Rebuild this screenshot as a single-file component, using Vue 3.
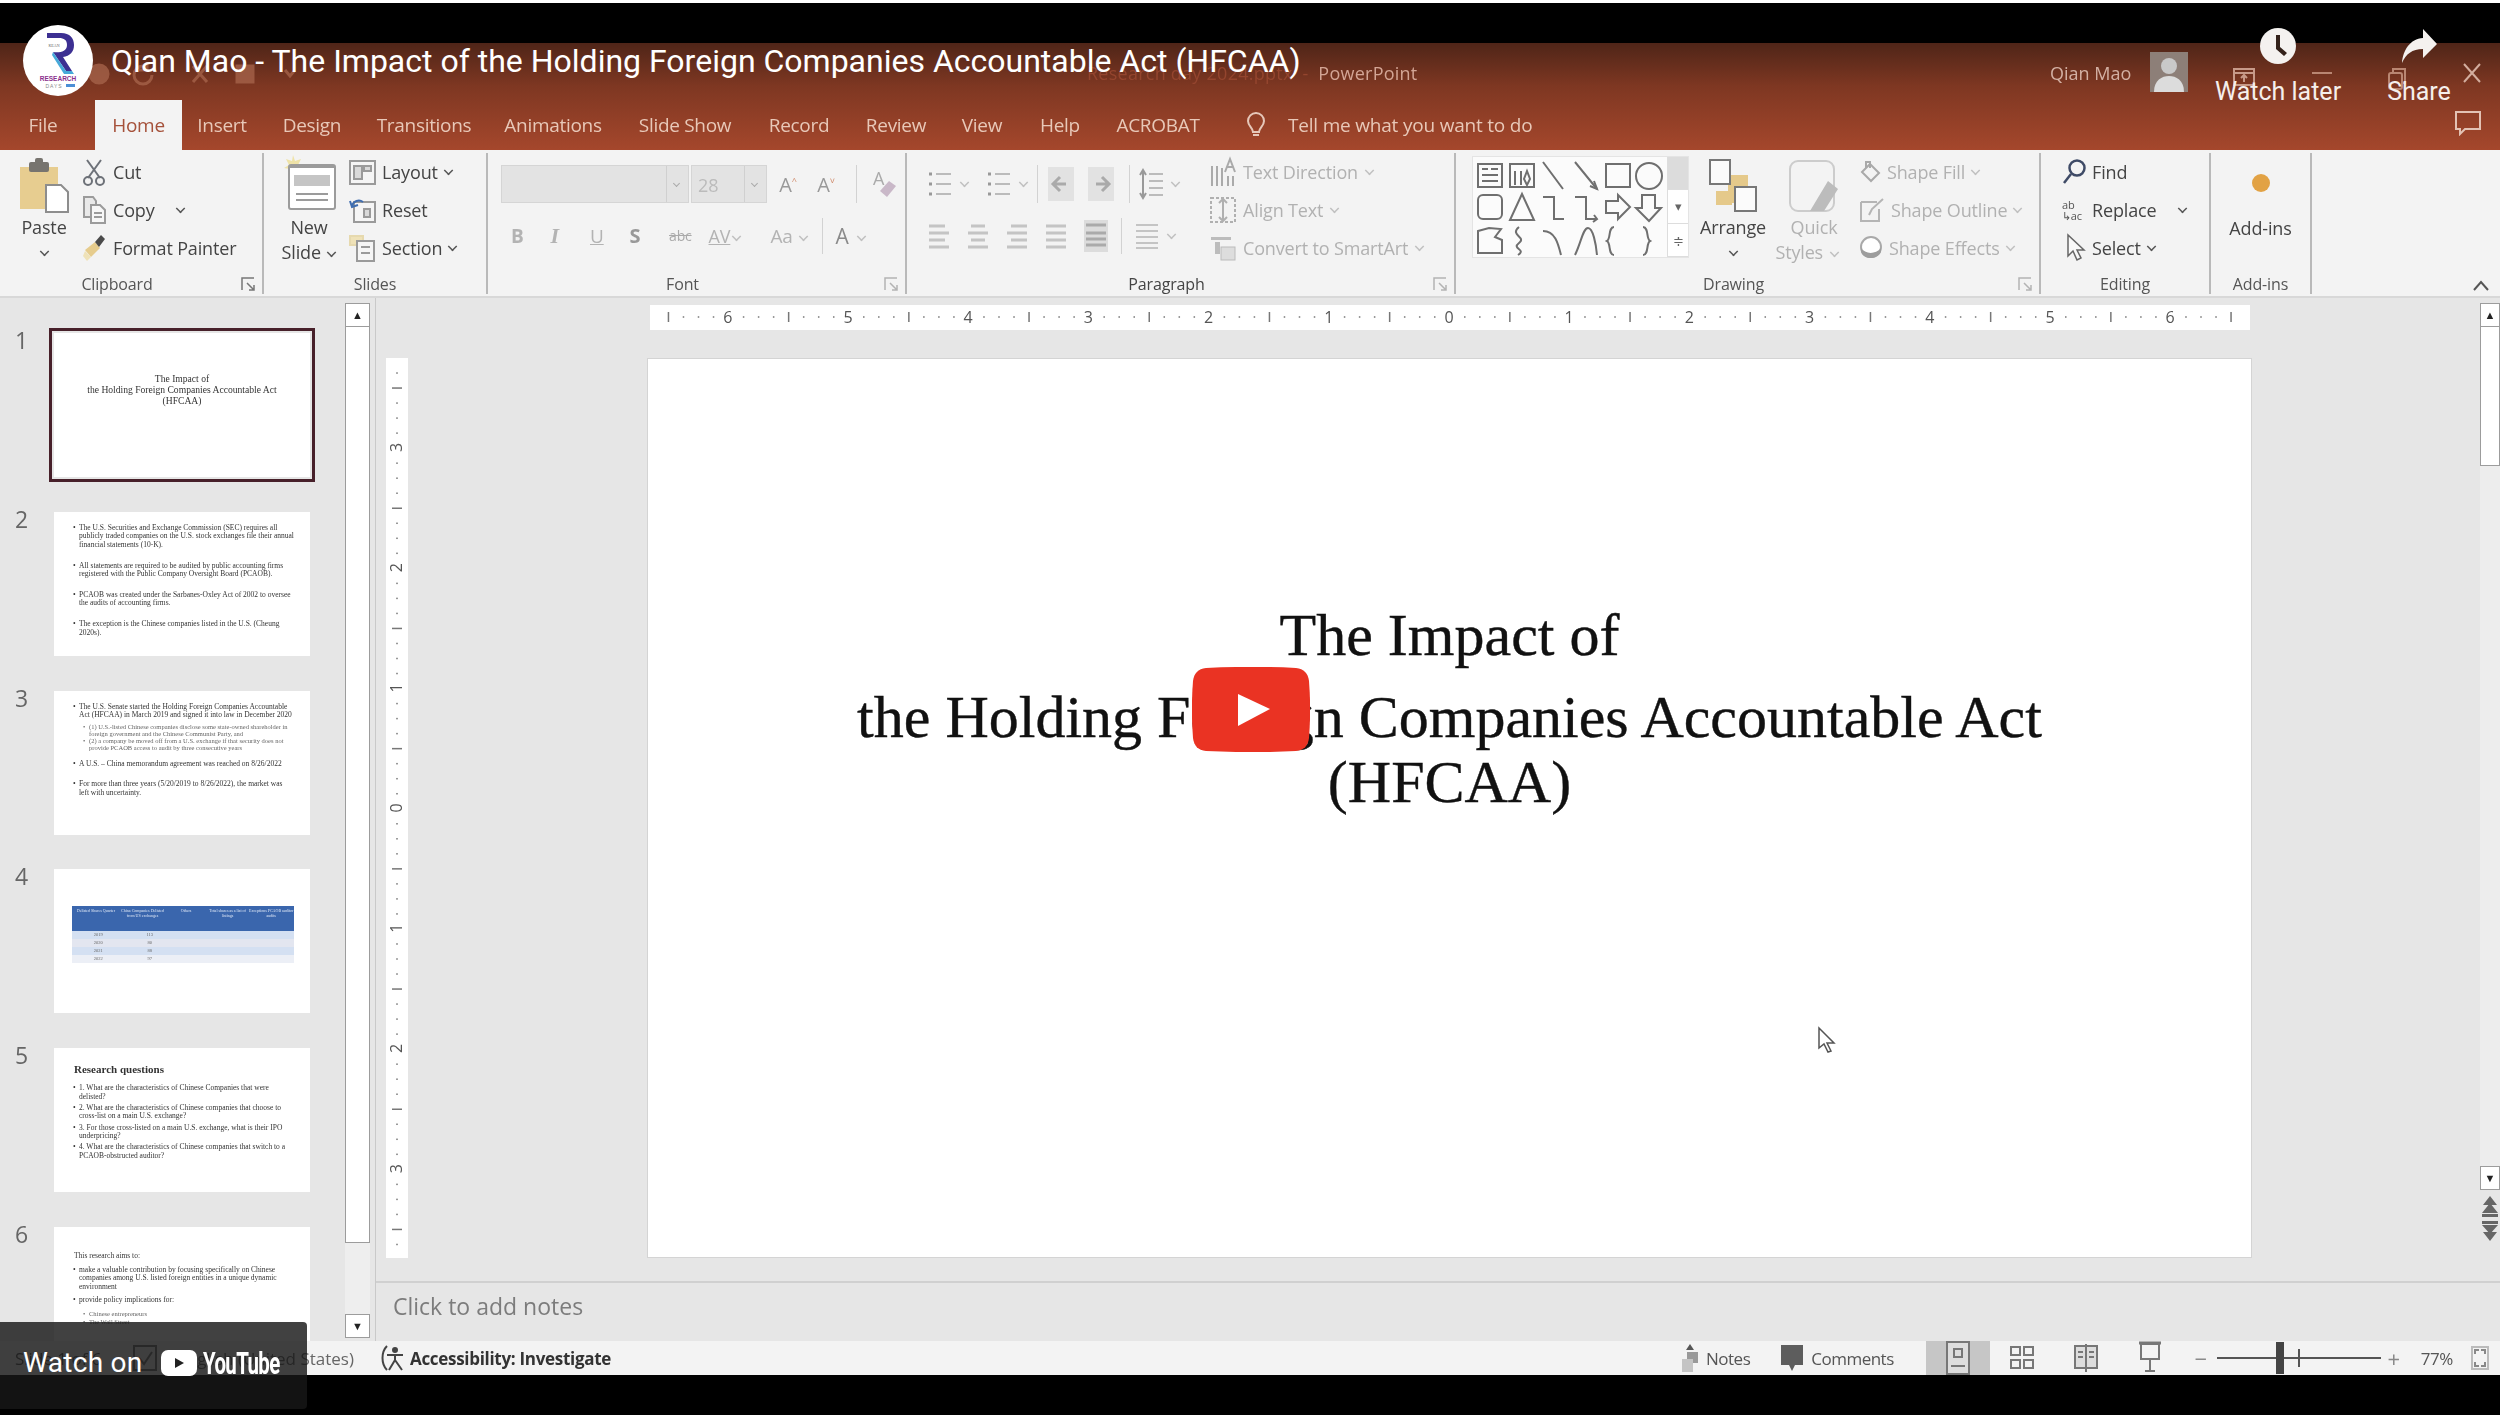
<template>
  <div class="page">
    <div class="bar-black top" />

    <div class="video">
      <header class="titlebar">
        <div class="window-row">
          <div class="qat">
            <svg width="220" height="30" viewBox="0 0 220 30" fill="none" stroke="#a8654c" stroke-width="3">
              <circle cx="14" cy="16" r="9" fill="#a8654c" />
              <path d="M58 8a9 9 0 1 0 9 9M62 4v8h-8" />
              <path d="M108 8l14 16M122 8l-14 16" />
              <rect x="152" y="8" width="16" height="16" fill="#a8654c" />
              <path d="M200 12l5 6 5-6" />
            </svg>
          </div>
          <div class="doc-title">Research day 2024.pptx &nbsp;-&nbsp; <span>PowerPoint</span></div>
          <div class="user-name">Qian Mao</div>
          <div class="avatar">
            <svg width="38" height="40" viewBox="0 0 38 40">
              <circle cx="19" cy="14" r="8" fill="#c9c9c9" />
              <path d="M4 40c0-12 8-16 15-16s15 4 15 16z" fill="#dcdcdc" />
            </svg>
          </div>
          <svg class="win-display" width="24" height="20" viewBox="0 0 24 20" fill="none" stroke="#c79a89" stroke-width="2">
            <rect x="2" y="2" width="20" height="16" />
            <path d="M2 6h20M12 15V9M9 11l3-3 3 3" />
          </svg>
          <span class="win-min" />
          <svg class="win-restore" width="20" height="24" viewBox="0 0 20 24" fill="none" stroke="#b98672" stroke-width="2">
            <rect x="2" y="6" width="13" height="16" rx="2" />
            <path d="M6 6V2h12v14h-3" />
          </svg>
          <svg class="win-close" width="20" height="22" viewBox="0 0 20 22" stroke="#d3ad9e" stroke-width="2">
            <path d="M2 2l16 18M18 2L2 20" />
          </svg>
        </div>

        <nav class="tabs">
          <div
            v-for="tab in tabs"
            :key="tab.label"
            class="tab"
            :class="{ active: tab.label === 'Home' }"
            :style="{ width: tab.w + 'px', marginRight: (tab.after || 0) + 'px' }"
          >
            {{ tab.label }}
          </div>
          <svg class="bulb" width="22" height="28" viewBox="0 0 22 28" fill="none" stroke="#e6c7b9" stroke-width="2">
            <path d="M11 2a8 8 0 0 0-8 8c0 5 5 7 5 11h6c0-4 5-6 5-11a8 8 0 0 0-8-8zM8 24h6" />
          </svg>
          <div class="tell-me">Tell me what you want to do</div>
          <svg class="comment-btn" width="28" height="26" viewBox="0 0 28 26" fill="none" stroke="#e3c2b4" stroke-width="2">
            <path d="M2 2h24v17H11l-5 5v-5H2z" />
          </svg>
        </nav>
      </header>

      <section class="ribbon">
        <div class="group" style="width: 264px">
          <div class="body clip-body">
            <div class="big paste">
              <svg width="52" height="62" viewBox="0 0 52 62">
                <rect x="2" y="14" width="38" height="42" fill="#e7cd90" />
                <rect x="11" y="9" width="20" height="10" rx="2" fill="#77746f" />
                <rect x="17" y="5" width="8" height="7" rx="2" fill="#77746f" />
                <path d="M28 32h15l7 7v20H28z" fill="#fff" stroke="#8d8d8d" stroke-width="2" />
              </svg>
              <span>Paste</span>
              <i class="chev" />
            </div>
            <div class="col clip-col">
              <div class="btn">
                <svg width="24" height="28" viewBox="0 0 24 28" fill="none" stroke="#6d7178" stroke-width="2">
                  <path d="M5 2l13 18M19 2L6 20" />
                  <circle cx="6" cy="23" r="4" />
                  <circle cx="18" cy="23" r="4" />
                </svg>
                <span>Cut</span>
              </div>
              <div class="btn">
                <svg width="24" height="30" viewBox="0 0 24 30" fill="none" stroke="#9b9b9b" stroke-width="2">
                  <path d="M2 2h9l3 4v16H2z" fill="#e9e9e9" />
                  <path d="M9 10h9l5 5v13H9z" fill="#f7f7f7" />
                  <path d="M12 18h8M12 22h8" />
                </svg>
                <span>Copy</span>
                <i class="chev copy-chev" />
              </div>
              <div class="btn">
                <svg width="24" height="30" viewBox="0 0 24 30">
                  <path d="M3 17l10-8 5 6-9 9z" fill="#e6cc8d" />
                  <path d="M13 9l6-7 4 4-6 8z" fill="#4a4a4a" />
                  <path d="M3 18l6 6-4 4-4-5z" fill="#efe2b8" />
                </svg>
                <span>Format Painter</span>
              </div>
            </div>
          </div>
          <div class="label launcher-pad">Clipboard</div>
          <svg class="launcher" width="14" height="14" viewBox="0 0 14 14" fill="none" stroke="#777" stroke-width="1.5">
            <path d="M1 13V1h12M6 6l7 7M13 8v5H8" />
          </svg>
        </div>

        <div class="group" style="width: 224px">
          <div class="body slides-body">
            <div class="big new-slide">
              <svg width="60" height="62" viewBox="0 0 60 62">
                <path d="M14 2l2 6 6-2-3 6 5 3-6 1 1 6-5-4-4 4 1-6-6-1 5-3-3-6 6 2z" fill="#efe3a8" />
                <rect x="10" y="12" width="46" height="44" rx="2" fill="#fff" stroke="#9b9b9b" stroke-width="2" />
                <rect x="10" y="12" width="46" height="3" fill="#9b9b9b" />
                <rect x="15" y="22" width="36" height="11" fill="#c5c5c5" />
                <path d="M17 41h32M17 47h32" stroke="#9b9b9b" stroke-width="2" />
              </svg>
              <span>New</span>
              <span>Slide <i class="chev inline" /></span>
            </div>
            <div class="col slides-col">
              <div class="btn">
                <svg width="27" height="27" viewBox="0 0 27 27" fill="#f5f5f5" stroke="#9a9a9a" stroke-width="2">
                  <rect x="1" y="2" width="25" height="23" />
                  <rect x="5" y="7" width="8" height="13" fill="#d9d9d9" />
                  <rect x="15" y="7" width="7" height="5" fill="#d9d9d9" />
                </svg>
                <span>Layout</span><i class="chev" />
              </div>
              <div class="btn">
                <svg width="27" height="27" viewBox="0 0 27 27" fill="none" stroke="#9a9a9a" stroke-width="2">
                  <rect x="5" y="5" width="21" height="20" fill="#f5f5f5" />
                  <path d="M3 9a7 7 0 0 1 11-4" stroke="#3f6db0" />
                  <path d="M1 4l2 6 6-2" stroke="#3f6db0" />
                  <rect x="15" y="12" width="6" height="8" fill="#d9d9d9" />
                </svg>
                <span>Reset</span>
              </div>
              <div class="btn">
                <svg width="27" height="27" viewBox="0 0 27 27" fill="none" stroke="#9a9a9a" stroke-width="2">
                  <rect x="1" y="1" width="13" height="9" fill="#efe2b8" stroke="#e6d9ae" />
                  <rect x="8" y="6" width="17" height="20" fill="#f5f5f5" />
                  <path d="M12 12h9M12 18h9" />
                </svg>
                <span>Section</span><i class="chev" />
              </div>
            </div>
          </div>
          <div class="label">Slides</div>
        </div>

        <div class="group" style="width: 419px">
          <div class="body font-body">
            <div class="font-row">
              <div class="combo name"><i class="combo-arrow" /></div>
              <div class="combo size">28<i class="combo-arrow" /></div>
              <span class="grow-a">A<sup>^</sup></span>
              <span class="grow-a">A<sup>˅</sup></span>
              <span class="sep" />
              <svg width="26" height="34" viewBox="0 0 26 34">
                <text x="2" y="18" font-size="18" fill="#aaa" font-family="Open Sans">A</text>
                <path d="M9 24l9-10 7 5-9 11z" fill="#c9b8c8" />
              </svg>
            </div>
            <div class="font-row second">
              <b class="ft">B</b>
              <i class="ft serif">I</i>
              <u class="ft">U</u>
              <b class="ft s">S</b>
              <s class="ft abc">abc</s>
              <span class="ft av">AV<i class="chev inline light" /></span>
              <span class="ft aa">Aa<i class="chev inline light" /></span>
              <span class="sep short" />
              <span class="ft color">A<i class="chev inline light" /></span>
            </div>
          </div>
          <div class="label launcher-pad">Font</div>
          <svg class="launcher faint" width="14" height="14" viewBox="0 0 14 14" fill="none" stroke="#999" stroke-width="1.5">
            <path d="M1 13V1h12M6 6l7 7M13 8v5H8" />
          </svg>
        </div>

        <div class="group" style="width: 549px">
          <div class="body para-body">
            <div class="para-left">
              <div class="para-row">
                <svg class="p-ico" width="24" height="30" viewBox="0 0 24 30" stroke="#bbb" stroke-width="2">
                  <path d="M8 5h15M8 15h15M8 25h15" />
                  <path d="M1 5h3M1 15h3M1 25h3" stroke-width="3" stroke="#999" />
                </svg>
                <i class="chev light" />
                <svg class="p-ico m2" width="24" height="30" viewBox="0 0 24 30" stroke="#bbb" stroke-width="2">
                  <path d="M8 5h15M8 15h15M8 25h15" />
                  <path d="M1 5h3M1 15h3M1 25h3" stroke-width="3" stroke="#999" />
                </svg>
                <i class="chev light" />
                <span class="sep tall" />
                <svg class="p-ico" width="26" height="34" viewBox="0 0 26 34">
                  <rect width="26" height="34" fill="#e2e2e2" />
                  <path d="M12 10l-7 7 7 7M6 17h12" stroke="#aaa" stroke-width="3" fill="none" />
                </svg>
                <svg class="p-ico m3" width="26" height="34" viewBox="0 0 26 34">
                  <rect width="26" height="34" fill="#e2e2e2" />
                  <path d="M14 10l7 7-7 7M20 17H8" stroke="#aaa" stroke-width="3" fill="none" />
                </svg>
                <span class="sep tall two" />
                <svg class="p-ico" width="24" height="34" viewBox="0 0 24 34" stroke="#bbb" stroke-width="2" fill="none">
                  <path d="M10 7h14M10 14h14M10 21h14M10 28h14" />
                  <path d="M4 3v28M1 8l3-5 3 5M1 26l3 5 3-5" stroke="#999" />
                </svg>
                <i class="chev light" />
              </div>
              <div class="para-row second">
                <svg v-for="a in aligns" :key="a.id" class="p-ico al" width="22" height="26" viewBox="0 0 22 26" stroke="#c4c4c4" stroke-width="3">
                  <path :d="a.d" />
                </svg>
                <svg class="p-ico dist" width="24" height="32" viewBox="0 0 24 32">
                  <rect width="24" height="32" fill="#dcdcdc" />
                  <path d="M2 5h20M2 13h20M2 19h20M2 25h20" stroke="#aaa" stroke-width="3" />
                </svg>
                <span class="sep short" />
                <svg class="p-ico" width="24" height="28" viewBox="0 0 24 28" stroke="#c4c4c4" stroke-width="2">
                  <path d="M1 3h22M1 9h22M1 15h22M1 21h22M1 26h22" />
                </svg>
                <i class="chev light" />
              </div>
            </div>
            <div class="col para-col muted">
              <div class="btn">
                <svg width="26" height="32" viewBox="0 0 26 32" fill="none" stroke="#aaa" stroke-width="2">
                  <path d="M2 10v20M7 10v20M12 12v18M18 20v10M23 20v10M15 16l5-13 5 13M17 11h6" />
                </svg>
                <span>Text Direction</span><i class="chev light" />
              </div>
              <div class="btn">
                <svg width="26" height="28" viewBox="0 0 26 28" fill="none" stroke="#b0b0b0" stroke-width="2" stroke-dasharray="3 2">
                  <rect x="1" y="2" width="24" height="24" />
                  <path d="M13 3v22M9 7l4-4 4 4M9 21l4 4 4-4" stroke-dasharray="none" />
                </svg>
                <span>Align Text</span><i class="chev light" />
              </div>
              <div class="btn">
                <svg width="26" height="28" viewBox="0 0 26 28" fill="#bcbcbc">
                  <path d="M1 3h20v3H1zM5 8h5v12H5z" />
                  <rect x="11" y="13" width="14" height="13" fill="#ddd" stroke="#bbb" />
                </svg>
                <span>Convert to SmartArt</span><i class="chev light" />
              </div>
            </div>
          </div>
          <div class="label launcher-pad strong">Paragraph</div>
          <svg class="launcher faint" width="14" height="14" viewBox="0 0 14 14" fill="none" stroke="#999" stroke-width="1.5">
            <path d="M1 13V1h12M6 6l7 7M13 8v5H8" />
          </svg>
        </div>

        <div class="group" style="width: 585px">
          <div class="body draw-body">
            <div class="gallery">
              <svg width="194" height="100" viewBox="0 0 194 100" fill="none" stroke="#6f6f6f" stroke-width="2">
                <rect x="5" y="7" width="24" height="23" />
                <path d="M9 12h6M18 12h7M9 18h16M9 24h16" />
                <rect x="37" y="7" width="24" height="23" />
                <path d="M42 28V14M48 28V14M54 28l-3-6 3-8 3 8z" />
                <path d="M70 5l20 27M102 5l22 27" />
                <path d="M121 24l3 8-7-3" />
                <rect x="133" y="7" width="24" height="23" />
                <circle cx="176" cy="19" r="13" />
                <rect x="5" y="38" width="24" height="24" rx="5" />
                <path d="M49 37l12 26H37z" />
                <path d="M70 40h11v22h10M102 40h11v22h11" />
                <path d="M121 58l3 4-4 3" />
                <path d="M133 44h12v-6l12 12-12 12v-6h-12z" />
                <path d="M169 38h13v13h6l-12 13-13-13h6z" />
                <path d="M5 74l11-3 12 1-6 8 7 3v13H5z" />
                <path d="M46 70c-10 8 8 10 0 16s8 6-1 12" />
                <path d="M70 74c12 0 15 12 18 24M102 98c6-12 8-27 13-27s8 16 9 27" />
                <path d="M141 70c-6 0-3 12-7 14 4 2 1 14 7 14M170 70c6 0 3 12 7 14-4 2-1 14-7 14" />
              </svg>
              <div class="gallery-scroll">
                <span class="seg first" />
                <span class="seg">▾</span>
                <span class="seg">≑</span>
              </div>
            </div>
            <div class="big arrange">
              <svg width="50" height="62" viewBox="0 0 50 62">
                <rect x="20" y="22" width="20" height="28" fill="#e5c98a" />
                <rect x="8" y="38" width="16" height="14" fill="#e5c98a" />
                <rect x="2" y="7" width="20" height="24" fill="#fbfbfb" stroke="#777" stroke-width="2" />
                <rect x="27" y="34" width="21" height="24" fill="#fbfbfb" stroke="#777" stroke-width="2" />
              </svg>
              <span>Arrange</span>
              <i class="chev" />
            </div>
            <div class="big quick muted">
              <svg width="56" height="62" viewBox="0 0 56 62" fill="none">
                <rect x="4" y="8" width="44" height="50" rx="8" stroke="#ccc" stroke-width="2" />
                <path d="M24 58l18-30 10 8-14 22z" fill="#bcbcbc" />
              </svg>
              <span>Quick</span>
              <span class="styles">Styles <i class="chev inline light" /></span>
            </div>
            <div class="col shape-col muted">
              <div class="btn">
                <svg width="22" height="26" viewBox="0 0 22 26" fill="none" stroke="#a9a9a9" stroke-width="2">
                  <path d="M11 5l9 9-8 8-9-9zM7 9V3h4v6" />
                </svg>
                <span>Shape Fill</span><i class="chev light" />
              </div>
              <div class="btn">
                <svg width="26" height="26" viewBox="0 0 26 26" fill="none" stroke="#b5b5b5" stroke-width="2">
                  <path d="M2 5h16M2 5v19h18V12M10 18l3-6 11-10" />
                </svg>
                <span>Shape Outline</span><i class="chev light" />
              </div>
              <div class="btn">
                <svg width="24" height="26" viewBox="0 0 24 26">
                  <path d="M12 2a10 10 0 1 1 0 20 10 10 0 0 1 0-20z" fill="#fff" stroke="#a9a9a9" stroke-width="2" />
                  <path d="M2 13c4 6 14 7 20 0v4c-4 8-17 8-20 0z" fill="#9d9d9d" />
                </svg>
                <span>Shape Effects</span><i class="chev light" />
              </div>
            </div>
          </div>
          <div class="label launcher-pad">Drawing</div>
          <svg class="launcher faint" width="14" height="14" viewBox="0 0 14 14" fill="none" stroke="#999" stroke-width="1.5">
            <path d="M1 13V1h12M6 6l7 7M13 8v5H8" />
          </svg>
        </div>

        <div class="group" style="width: 170px">
          <div class="body edit-body">
            <div class="col">
              <div class="btn">
                <svg width="24" height="28" viewBox="0 0 24 28" fill="none" stroke="#3e4a66" stroke-width="2.5">
                  <circle cx="15" cy="10" r="7.5" />
                  <path d="M9 16L2 25" />
                </svg>
                <span>Find</span>
              </div>
              <div class="btn">
                <span class="replace-ico"><em>ab</em><em>↳ac</em></span>
                <span>Replace</span>
                <i class="chev replace-chev" />
              </div>
              <div class="btn">
                <svg width="24" height="30" viewBox="0 0 24 30" fill="#f8f8f8" stroke="#666" stroke-width="1.5">
                  <path d="M6 2v21l5-5 4 9 4-2-4-8h7z" />
                </svg>
                <span>Select</span><i class="chev" />
              </div>
            </div>
          </div>
          <div class="label">Editing</div>
        </div>

        <div class="group" style="width: 101px">
          <div class="body addin-body">
            <span class="addin-dot" />
            <span class="addin-text">Add-ins</span>
          </div>
          <div class="label">Add-ins</div>
        </div>

        <svg class="collapse" width="18" height="12" viewBox="0 0 18 12" fill="none" stroke="#555" stroke-width="2">
          <path d="M2 10l7-8 7 8" />
        </svg>
      </section>

      <main class="main">
        <aside class="thumbs">
          <div v-for="slide in thumbs" :key="slide.n" class="thumb-row">
            <span class="thumb-num">{{ slide.n }}</span>
            <div class="thumb" :class="[{ selected: slide.n === 1, last: slide.n === 6 }, slide.kind]">
              <template v-if="slide.kind === 'cover'">
                <p>The Impact of</p>
                <p>the Holding Foreign Companies Accountable Act</p>
                <p>(HFCAA)</p>
              </template>
              <template v-else-if="slide.kind === 'table'">
                <div class="t-head">
                  <span v-for="h in tableHead" :key="h">{{ h }}</span>
                </div>
                <div v-for="r in tableRows" :key="r[0]" class="t-row">
                  <span>{{ r[0] }}</span><span>{{ r[1] }}</span>
                </div>
              </template>
              <template v-else>
                <h4 v-if="slide.title">{{ slide.title }}</h4>
                <p v-for="line in slide.lines" :key="line.t" :class="line.c">{{ line.t }}</p>
              </template>
            </div>
          </div>
        </aside>

        <div class="thumb-scroll">
          <span class="sb-btn">▲</span>
          <span class="sb-thumb" />
          <span class="sb-rest" />
          <span class="sb-btn">▼</span>
        </div>

        <div class="editor">
          <div class="editor-top">
            <div class="canvas">
              <svg class="ruler-h" width="1600" height="25" viewBox="0 0 1600 25">
                <rect width="1600" height="25" fill="#fff" />
                <template v-for="t in hTicks" :key="t.k">
                  <text v-if="t.num !== null" :x="t.p" y="18" text-anchor="middle" class="ruler-num">{{ t.num }}</text>
                  <rect v-else-if="t.long" :x="t.p" y="7" width="1.5" height="10" fill="#777" />
                  <rect v-else :x="t.p" y="11" width="1.5" height="2" fill="#999" />
                </template>
              </svg>
              <div class="canvas-row">
                <svg class="ruler-v" width="22" height="900" viewBox="0 0 22 900">
                  <rect width="22" height="900" fill="#fff" />
                  <template v-for="t in vTicks" :key="t.k">
                    <text
                      v-if="t.num !== null"
                      x="11"
                      :y="t.p"
                      text-anchor="middle"
                      class="ruler-num"
                      :transform="`rotate(-90 11 ${t.p}) translate(0 5)`"
                    >{{ t.num }}</text>
                    <rect v-else-if="t.long" x="6" :y="t.p" width="10" height="1.5" fill="#777" />
                    <rect v-else x="10" :y="t.p" width="2" height="1.5" fill="#999" />
                  </template>
                </svg>
                <article class="slide">
                  <p>The Impact of</p>
                  <p class="l2">the Holding Foreign Companies Accountable Act</p>
                  <p>(HFCAA)</p>
                  <svg class="cursor" width="20" height="28" viewBox="0 0 20 28" fill="#fff" stroke="#555" stroke-width="1.5">
                    <path d="M2 2v20l5-4 4 8 3-1-4-8h7z" />
                  </svg>
                </article>
              </div>
            </div>
            <div class="editor-scroll">
              <span class="sb-btn">▲</span>
              <span class="es-thumb" />
              <span class="es-rest" />
              <span class="sb-btn">▼</span>
              <svg class="page-arrows" width="21" height="50" viewBox="0 0 21 50" fill="#666">
                <path d="M10 2l7 9H3zM10 9l8 10H2zM2 20h16v3H2zM2 27h16v3H2zM2 31h16l-8 9zM3 38h14l-7 9z" />
              </svg>
            </div>
          </div>
          <div class="notes">Click to add notes</div>
        </div>
      </main>

      <footer class="status">
        <span class="st-slide">Slide 1 of 6</span>
        <svg class="st-check" width="24" height="26" viewBox="0 0 24 26" fill="none" stroke="#777" stroke-width="2">
          <rect x="1" y="1" width="22" height="24" />
          <path d="M6 13l5 6 8-12" />
        </svg>
        <span class="st-lang">English (United States)</span>
        <svg class="st-acc" width="24" height="28" viewBox="0 0 24 28" fill="none" stroke="#444" stroke-width="2">
          <path d="M6 2C0 8 0 20 6 26" />
          <circle cx="14" cy="6" r="2" fill="#444" />
          <path d="M6 11h16M14 11v5l-6 10M14 16l7 10" />
        </svg>
        <strong class="st-a11y">Accessibility: Investigate</strong>

        <svg class="st-notes-ico" width="18" height="30" viewBox="0 0 18 30">
          <path d="M9 1l4 6H5z" fill="#555" />
          <rect x="6" y="9" width="11" height="11" fill="#999" />
          <rect x="1" y="16" width="11" height="13" fill="#c4c4c4" />
        </svg>
        <span class="st-text">Notes</span>
        <svg class="st-comm-ico" width="24" height="30" viewBox="0 0 24 30">
          <path d="M1 2h22v20H15l-3 6-3-6H1z" fill="#5d5d5d" />
        </svg>
        <span class="st-text">Comments</span>

        <span class="view active">
          <svg width="24" height="34" viewBox="0 0 24 34" fill="#ddd" stroke="#777" stroke-width="2">
            <rect x="1" y="1" width="22" height="32" />
            <rect x="8" y="8" width="8" height="8" fill="none" />
            <path d="M5 25h14" />
          </svg>
        </span>
        <span class="view">
          <svg width="24" height="24" viewBox="0 0 24 24" fill="none" stroke="#777" stroke-width="2">
            <rect x="1" y="1" width="9" height="8" /><rect x="14" y="1" width="9" height="8" />
            <rect x="1" y="14" width="9" height="8" /><rect x="14" y="14" width="9" height="8" />
          </svg>
        </span>
        <span class="view">
          <svg width="24" height="30" viewBox="0 0 24 30" fill="#ddd" stroke="#777" stroke-width="2">
            <rect x="1" y="3" width="22" height="22" />
            <path d="M12 1v28M4 9h5M4 14h5M15 9h5M15 14h5" />
          </svg>
        </span>
        <span class="view">
          <svg width="24" height="34" viewBox="0 0 24 34" fill="none" stroke="#777" stroke-width="2">
            <path d="M1 2h22" stroke-width="3" />
            <rect x="3" y="3" width="18" height="15" />
            <path d="M12 18v12M7 30h10" />
          </svg>
        </span>

        <div class="zoom">
          <span class="z-sign">−</span>
          <div class="z-track"><span class="z-thumb" /><span class="z-tick" /></div>
          <span class="z-sign">+</span>
          <span class="z-pct">77%</span>
          <svg width="18" height="24" viewBox="0 0 18 24" fill="none" stroke="#888" stroke-width="2">
            <rect x="1" y="1" width="16" height="22" stroke="#bbb" />
            <path d="M4 8V4h4M14 8V4h-4M4 16v4h4M14 16v4h-4" />
          </svg>
        </div>
      </footer>
    </div>

    <div class="bar-black bottom" />
    <div class="bar-white" />

    <!-- youtube player chrome on top of the video -->
    <div class="yt-logo">
      <svg width="70" height="72" viewBox="0 0 70 72">
        <path d="M24 8h14c9 0 13 5 13 12s-4 11-11 12l9 14h-6L30 27c6 1 14 0 14-7 0-5-3-7-8-7H24z" fill="#3c2f92" />
        <path d="M30 27l13 19h6l2 3H41L29 30z" fill="#46a9d9" />
        <text x="35" y="56" text-anchor="middle" class="logo-r">RESEARCH</text>
        <text x="31" y="63" text-anchor="middle" class="logo-d">DAYS</text>
        <rect x="43" y="59" width="9" height="3" fill="#4b8fd6" />
        <text x="31" y="22" text-anchor="middle" class="logo-k">KEAN</text>
      </svg>
    </div>
    <div class="yt-title">Qian Mao - The Impact of the Holding Foreign Companies Accountable Act (HFCAA)</div>
    <div class="yt-action later">
      <svg width="38" height="38" viewBox="0 0 38 38">
        <circle cx="19" cy="19" r="18" fill="#f4f1ef" />
        <path d="M17 8h4v12l7 6-3 3-8-7z" fill="#33211a" />
      </svg>
      <span>Watch later</span>
    </div>
    <div class="yt-action share">
      <svg width="38" height="38" viewBox="0 0 38 38">
        <path d="M23 2l14 15-14 14v-9C12 22 6 27 2 36c1-13 8-24 21-25z" fill="#f4f1ef" />
      </svg>
      <span>Share</span>
    </div>
    <div class="yt-play">
      <svg width="118" height="85" viewBox="0 0 118 85">
        <path d="M14 1c30-1.500 60-1.500 90 0 8 1 12 5 13 13 1.500 19 1.500 38 0 57-1 8-5 12-13 13-30 1.500-60 1.500-90 0-8-1-12-5-13-13-1.500-19-1.500-38 0-57 1-8 5-12 13-13z" fill="#ea3323" />
        <path d="M46 27l32 15-32 17z" fill="#fff" />
      </svg>
    </div>
    <div class="yt-watch">
      <span class="watch-text">Watch on</span>
      <span class="yt-mark">
        <svg width="36" height="26" viewBox="0 0 36 26">
          <rect width="36" height="26" rx="7" fill="#fff" />
          <path d="M14 8l9 5-9 5z" fill="#222" />
        </svg>
      </span>
      <span class="yt-word">YouTube</span>
    </div>
  </div>
</template>

<script setup>
const tabs = [
  { label: 'File', w: 86, after: 9 },
  { label: 'Home', w: 87 },
  { label: 'Insert', w: 80 },
  { label: 'Design', w: 100 },
  { label: 'Transitions', w: 124 },
  { label: 'Animations', w: 134 },
  { label: 'Slide Show', w: 130 },
  { label: 'Record', w: 98 },
  { label: 'Review', w: 96 },
  { label: 'View', w: 76 },
  { label: 'Help', w: 80 },
  { label: 'ACROBAT', w: 116 }
]

const aligns = [
  { id: 'left', d: 'M1 3h16M1 10h20M1 17h16M1 24h20' },
  { id: 'center', d: 'M4 3h14M1 10h20M4 17h14M1 24h20' },
  { id: 'right', d: 'M5 3h16M1 10h20M5 17h16M1 24h20' },
  { id: 'justify', d: 'M1 3h20M1 10h20M1 17h20M1 24h20' }
]

const tableHead = ['Delisted Shares Quarter', 'China Companies Delisted from US exchanges', 'Others', 'Total shares as a list of listings', 'Exceptions PCAOB auditor audits']
const tableRows = [['2019', '113'], ['2020', '80'], ['2021', '88'], ['2022', '97']]

const thumbs = [
  { n: 1, kind: 'cover' },
  {
    n: 2,
    kind: 'text',
    lines: [
      { t: 'The U.S. Securities and Exchange Commission (SEC) requires all publicly traded companies on the U.S. stock exchanges file their annual financial statements (10-K).' },
      { t: 'All statements are required to be audited by public accounting firms registered with the Public Company Oversight Board (PCAOB).' },
      { t: 'PCAOB was created under the Sarbanes-Oxley Act of 2002 to oversee the audits of accounting firms.' },
      { t: 'The exception is the Chinese companies listed in the U.S. (Cheung 2020s).' }
    ]
  },
  {
    n: 3,
    kind: 'text',
    lines: [
      { t: 'The U.S. Senate started the Holding Foreign Companies Accountable Act (HFCAA) in March 2019 and signed it into law in December 2020' },
      { t: '(1) U.S.-listed Chinese companies disclose some state-owned shareholder in foreign government and the Chinese Communist Party, and', c: 'sub' },
      { t: '(2) a company be moved off from a U.S. exchange if that security does not provide PCAOB access to audit by three consecutive years', c: 'sub' },
      { t: 'A U.S. – China memorandum agreement was reached on 8/26/2022' },
      { t: 'For more than three years (5/20/2019 to 8/26/2022), the market was left with uncertainty.' }
    ]
  },
  { n: 4, kind: 'table' },
  {
    n: 5,
    kind: 'text',
    title: 'Research questions',
    lines: [
      { t: '1. What are the characteristics of Chinese Companies that were delisted?' },
      { t: '2. What are the characteristics of Chinese companies that choose to cross-list on a main U.S. exchange?' },
      { t: '3. For those cross-listed on a main U.S. exchange, what is their IPO underpricing?' },
      { t: '4. What are the characteristics of Chinese companies that switch to a PCAOB-obstructed auditor?' }
    ]
  },
  {
    n: 6,
    kind: 'text',
    lines: [
      { t: 'This research aims to:', c: 'plain' },
      { t: 'make a valuable contribution by focusing specifically on Chinese companies among U.S. listed foreign entities in a unique dynamic environment' },
      { t: 'provide policy implications for:' },
      { t: 'Chinese entrepreneurs', c: 'sub' },
      { t: 'The Wall Street', c: 'sub' }
    ]
  }
]

// ruler marks, every eighth of an inch from the slide centre
function ticks(centre, count) {
  const list = []
  for (let k = -count; k <= count; k++) {
    list.push({
      k,
      p: centre + (k * 120.2) / 8,
      num: k % 8 === 0 ? String(Math.abs(k / 8)) : null,
      long: k % 4 === 0
    })
  }
  return list
}

const hTicks = ticks(799, 52)
const vTicks = ticks(450, 29)
</script>

<style>
html,
body {
  margin: 0;
  background: #fff;
}
</style>

<style scoped>
.page {
  position: relative;
  width: 2500px;
  height: 1418px;
  padding-top: 3px;
  box-sizing: border-box;
  overflow: hidden;
  background: #fff;
  font-family: "Open Sans", sans-serif;
  color: #444;
}

.bar-black {
  background: #000;
}
.bar-black.top {
  height: 40px;
}
.bar-black.bottom {
  height: 40px;
}
.bar-white {
  height: 3px;
  background: #fff;
}

.video {
  height: 1332px;
  display: flex;
  flex-direction: column;
  filter: blur(0.6px);
  overflow: hidden;
}

/* title bar */
.titlebar {
  height: 107px;
  flex: none;
  background: linear-gradient(#4f2518, #7e3722 40%, #a5472c);
  color: #e8c8b8;
}
.window-row {
  height: 57px;
  display: flex;
  align-items: center;
  padding-top: 2px;
  box-sizing: border-box;
}
.qat {
  width: 1087px;
  padding-left: 85px;
  box-sizing: border-box;
  display: flex;
  opacity: 0.75;
}
.doc-title {
  width: 963px;
  font-size: 18px;
  letter-spacing: 0.25px;
  color: #94452e;
  white-space: nowrap;
}
.doc-title span {
  color: #d3a595;
}
.user-name {
  width: 100px;
  font-size: 18px;
  color: #d3b0a3;
}
.avatar {
  width: 38px;
  height: 40px;
  background: #8d7f78;
  margin-bottom: 2px;
}
.win-display {
  margin-left: 44px;
  margin-top: 8px;
}
.win-min {
  width: 20px;
  height: 2px;
  background: #b98672;
  margin-left: 56px;
}
.win-restore {
  margin-left: 55px;
  margin-top: 12px;
}
.win-close {
  margin-left: 55px;
}
.tabs {
  height: 50px;
  display: flex;
  align-items: center;
  font-size: 19px;
}
.tab {
  height: 50px;
  line-height: 50px;
  text-align: center;
  flex: none;
  letter-spacing: -0.3px;
}
.tab.active {
  background: #f3f3f3;
  color: #a5513a;
}
.bulb {
  margin-left: 29px;
}
.tell-me {
  margin-left: 21px;
  letter-spacing: -0.2px;
  white-space: nowrap;
}
.comment-btn {
  margin-left: auto;
  margin-right: 18px;
  margin-top: -4px;
}

/* ribbon */
.ribbon {
  position: relative;
  height: 148px;
  flex: none;
  display: flex;
  background: #f3f3f3;
  border-bottom: 2px solid #d8d8d8;
  box-sizing: border-box;
  padding-top: 3px;
  font-size: 18px;
  letter-spacing: -0.15px;
}
.group {
  position: relative;
  height: 141px;
  flex: none;
  display: flex;
  flex-direction: column;
  border-right: 2px solid #b9b9b9;
  box-sizing: border-box;
}
.body {
  height: 122px;
  display: flex;
  flex: none;
}
.label {
  height: 19px;
  line-height: 19px;
  font-size: 16px;
  text-align: center;
  color: #555;
}
.launcher-pad {
  padding-right: 28px;
}
.label.strong {
  color: #444;
}
.launcher {
  position: absolute;
  right: 7px;
  bottom: 3px;
}
.launcher.faint {
  opacity: 0.7;
}
.col {
  display: flex;
  flex-direction: column;
}
.btn {
  height: 38px;
  display: flex;
  align-items: center;
  gap: 6px;
  white-space: nowrap;
}
.btn svg {
  flex: none;
}
.muted,
.muted .btn {
  color: #b1b1b1;
}
.big {
  display: flex;
  flex-direction: column;
  align-items: center;
  line-height: 25px;
}
.big svg {
  height: 62px;
  flex: none;
}
.chev {
  display: inline-block;
  width: 7px;
  height: 7px;
  border-right: 2px solid #555;
  border-bottom: 2px solid #555;
  transform: rotate(45deg) scale(0.75);
  margin-top: -3px;
  flex: none;
}
.chev.light {
  border-color: #c0c0c0;
}
.big > .chev {
  margin-top: 7px;
}
.chev.inline {
  margin: 0 0 3px 2px;
  vertical-align: middle;
}

.clip-body {
  padding-left: 18px;
}
.paste {
  width: 52px;
}
.clip-col {
  margin-left: 12px;
}
.clip-col .btn {
  gap: 7px;
}
.copy-chev {
  margin-left: 14px;
}

.slides-body {
  padding-left: 14px;
}
.new-slide {
  width: 62px;
}
.slides-col {
  margin-left: 9px;
}

/* font group */
.font-body {
  flex-direction: column;
  padding-left: 13px;
  color: #aaa;
}
.font-row {
  display: flex;
  align-items: center;
  height: 40px;
  margin-top: 11px;
}
.font-row.second {
  margin-top: 12px;
  font-size: 19px;
  padding-left: 10px;
}
.combo {
  position: relative;
  height: 38px;
  line-height: 38px;
  background: #e3e3e3;
  border: 1px solid #d5d5d5;
  box-sizing: border-box;
  flex: none;
  color: #bbb;
}
.combo.name {
  width: 188px;
}
.combo.size {
  width: 76px;
  margin-left: 2px;
  padding-left: 6px;
}
.combo-arrow {
  position: absolute;
  right: 0;
  top: 0;
  bottom: 0;
  width: 21px;
  border-left: 1px solid #d0d0d0;
}
.combo-arrow::after {
  content: "";
  position: absolute;
  left: 7px;
  top: 15px;
  width: 4px;
  height: 4px;
  border-right: 1px solid #aaa;
  border-bottom: 1px solid #aaa;
  transform: rotate(45deg);
}
.grow-a {
  width: 38px;
  text-align: center;
  font-size: 20px;
  color: #999;
}
.grow-a:first-of-type {
  margin-left: 2px;
}
.grow-a sup {
  font-size: 9px;
  color: #d08a6a;
}
.sep {
  width: 1px;
  height: 38px;
  background: #d2d2d2;
  margin: 0 14px 0 11px;
  flex: none;
}
.sep.short {
  height: 36px;
}
.ft {
  width: 39.5px;
  flex: none;
  color: #b3b3b3;
  line-height: 40px;
}
.ft.serif {
  font-family: "Liberation Serif", serif;
  font-size: 22px;
  font-weight: 700;
}
.ft.s {
  color: #999;
  font-size: 20px;
}
.ft.abc {
  font-size: 14px;
  color: #aaa;
}
.ft.av {
  width: 62px;
  font-size: 18px;
  text-decoration: underline;
}
.ft.aa {
  width: 51px;
}
.ft.aa .chev {
  margin-left: 6px;
}
.ft.color {
  color: #8a8a8a;
  font-size: 21px;
  width: 44px;
}
.ft.color .chev {
  margin-left: 8px;
}
.second .sep {
  margin: 0 13px 0 0;
}

/* paragraph group */
.para-body {
  padding-left: 21px;
}
.para-left {
  width: 282px;
  flex: none;
}
.para-row {
  display: flex;
  align-items: center;
  height: 40px;
  margin-top: 11px;
}
.para-row.second {
  margin-top: 12px;
}
.para-row > .chev {
  margin-left: 8px;
}
.p-ico {
  flex: none;
}
.p-ico.m2 {
  margin-left: 18px;
}
.para-row .sep.tall {
  margin: 0 10px 0 9px;
}
.para-row .sep.tall.two {
  margin: 0 9px 0 15px;
}
.p-ico.m3 {
  margin-left: 14px;
}
.p-ico.al {
  margin-right: 17px;
}
.p-ico.dist {
  margin-right: 13px;
}
.para-col .btn {
  gap: 7px;
}

/* drawing group */
.draw-body {
  padding-left: 16px;
}
.gallery {
  display: flex;
  height: 102px;
  margin-top: 3px;
  background: #fbfbfb;
  border: 1px solid #e4e4e4;
  box-sizing: border-box;
  width: 217px;
  flex: none;
}
.gallery svg {
  flex: none;
}
.gallery-scroll {
  flex: 1;
  display: flex;
  flex-direction: column;
  border-left: 1px solid #ddd;
}
.seg {
  flex: 1;
  text-align: center;
  font-size: 13px;
  line-height: 32px;
  color: #666;
  background: #fff;
  border-bottom: 1px solid #ddd;
}
.seg.first {
  background: #dcdcdc;
}
.arrange {
  width: 72px;
  margin-left: 8px;
}
.quick {
  width: 70px;
  margin-left: 10px;
}
.styles {
  margin-left: -14px;
  white-space: nowrap;
}
.shape-col {
  margin-left: 10px;
}

/* editing */
.edit-body {
  padding-left: 21px;
}
.replace-ico {
  width: 24px;
  display: flex;
  flex-direction: column;
  font-size: 11px;
  line-height: 11px;
  color: #555;
  flex: none;
}
.replace-ico em {
  font-style: normal;
}
.replace-chev {
  margin-left: 16px;
}
.addin-body {
  flex-direction: column;
  align-items: center;
}
.addin-dot {
  width: 18px;
  height: 18px;
  border-radius: 50%;
  background: #e2a244;
  margin-top: 21px;
}
.addin-text {
  margin-top: 24px;
}
.collapse {
  position: absolute;
  right: 10px;
  bottom: 4px;
}

/* main area */
.main {
  height: 1043px;
  flex: none;
  display: flex;
  background: #e6e6e6;
  overflow: hidden;
}
.thumbs {
  width: 345px;
  flex: none;
  padding-top: 35px;
  box-sizing: border-box;
  display: flex;
  flex-direction: column;
  gap: 34.8px;
  overflow: hidden;
}
.thumb-row {
  display: flex;
  flex: none;
}
.thumb-num {
  width: 44px;
  padding-left: 15px;
  box-sizing: border-box;
  font-size: 23px;
  line-height: 26px;
  margin-top: -6px;
  color: #666;
  flex: none;
}
.thumb {
  width: 256px;
  height: 144px;
  flex: none;
  box-sizing: border-box;
  background: #fff;
  margin-left: 10px;
  padding: 12px 16px 0 20px;
  font-family: "Liberation Serif", serif;
  font-size: 7.500px;
  line-height: 8.6px;
  color: #333;
  overflow: hidden;
}
.thumb p {
  margin: 0 0 12px;
  padding-left: 5px;
  position: relative;
}
.thumb p::before {
  content: "•";
  position: absolute;
  left: -1px;
}
.thumb p.sub {
  font-size: 6.500px;
  line-height: 7px;
  margin: -9px 0 9px 10px;
  color: #666;
}
.thumb p.plain::before {
  content: none;
}
.thumb p.plain {
  padding-left: 0;
}
.thumb h4 {
  margin: 2px 0 8px;
  font-size: 11px;
  line-height: 14px;
  font-weight: 700;
}
.thumb h4 ~ p {
  margin-bottom: 2.5px;
}
.thumb.last {
  padding-top: 25px;
}
.thumb.last p {
  margin-bottom: 5px;
}
.thumb.last p.sub {
  margin: 0 0 1px 10px;
}
.thumb.selected {
  outline: 3px solid #47202a;
  outline-offset: 2px;
}
.thumb.cover {
  padding: 40px 0 0;
  text-align: center;
  font-size: 9.600px;
  line-height: 11px;
}
.thumb.cover p {
  margin: 0;
  padding: 0;
}
.thumb.cover p::before {
  content: none;
}
.thumb.table {
  padding: 37px 16px 0 18px;
  font-size: 4px;
  line-height: 4.6px;
}
.t-head {
  display: grid;
  grid-template-columns: 1.15fr 1.1fr 1fr 1fr 1.1fr;
  height: 25px;
  background: #3a66ad;
  color: #dfe8f6;
  text-align: center;
  padding-top: 3px;
  box-sizing: border-box;
  overflow: hidden;
}
.t-row {
  display: grid;
  grid-template-columns: 1.15fr 1.1fr 2.6fr;
  height: 8px;
  line-height: 8px;
  background: #d4e0f2;
  text-align: center;
  font-size: 4.500px;
  color: #666;
}
.t-row:nth-child(odd) {
  background: #e3e6f0;
}
.t-row:last-child {
  background: #eceff6;
}

.thumb-scroll {
  width: 25px;
  flex: none;
  display: flex;
  flex-direction: column;
  padding-top: 5px;
  box-sizing: border-box;
  height: 1040px;
}
.sb-btn {
  height: 24px;
  flex: none;
  background: #fff;
  border: 1px solid #9c9c9c;
  box-sizing: border-box;
  text-align: center;
  font-size: 11px;
  line-height: 22px;
  color: #222;
}
.sb-thumb {
  height: 916px;
  flex: none;
  background: #fff;
  border: 1px solid #9c9c9c;
  border-top: none;
  box-sizing: border-box;
}
.sb-rest {
  flex: 1;
  background: #eeeeee;
}

.editor {
  flex: 1;
  margin-left: 5px;
  border-left: 1px solid #c9c9c9;
  display: flex;
  flex-direction: column;
  min-width: 0;
}
.editor-top {
  height: 985px;
  flex: none;
  display: flex;
  border-bottom: 2px solid #d0d0d0;
  box-sizing: border-box;
}
.canvas {
  flex: 1;
  padding-top: 7px;
  min-width: 0;
}
.ruler-h {
  display: block;
  margin-left: 274px;
}
.ruler-num {
  font-family: "Open Sans", sans-serif;
  font-size: 16px;
  fill: #555;
}
.canvas-row {
  display: flex;
  margin-top: 28px;
}
.ruler-v {
  margin-left: 10px;
  flex: none;
}
.slide {
  position: relative;
  width: 1605px;
  height: 900px;
  margin-left: 239px;
  flex: none;
  box-sizing: border-box;
  padding-top: 244px;
  background: #fff;
  border: 1px solid #d4d4d4;
  text-align: center;
  font-family: "Liberation Serif", serif;
  font-size: 60px;
  line-height: 65px;
  color: #111;
  -webkit-text-stroke: 0.4px #111;
}
.slide p {
  margin: 0;
}
.slide p.l2 {
  margin-top: 17px;
}
.cursor {
  position: absolute;
  left: 1169px;
  top: 667px;
}
.editor-scroll {
  width: 20px;
  flex: none;
  display: flex;
  flex-direction: column;
  padding-top: 5px;
  box-sizing: border-box;
}
.es-thumb {
  height: 139px;
  flex: none;
  background: #fff;
  border: 1px solid #9c9c9c;
  border-top: none;
  box-sizing: border-box;
}
.es-rest {
  height: 700px;
  flex: none;
  background: #ededed;
}
.page-arrows {
  margin-top: 4px;
  flex: none;
}
.notes {
  flex: 1;
  padding-left: 17px;
  line-height: 47px;
  font-size: 23px;
  color: #7c7c7c;
}

/* status bar */
.status {
  height: 34px;
  flex: none;
  display: flex;
  align-items: center;
  background: #f3f3f3;
  font-size: 17px;
  color: #555;
  white-space: nowrap;
}
.st-slide {
  margin-left: 15px;
  width: 118px;
  flex: none;
}
.st-check {
  flex: none;
}
.st-lang {
  width: 184px;
  flex: none;
  text-align: right;
  color: #666;
  margin-left: 13px;
}
.st-acc {
  margin-left: 27px;
  flex: none;
}
.st-a11y {
  margin-left: 5px;
  width: 1271px;
  flex: none;
  color: #333;
  font-size: 17px;
  letter-spacing: -0.3px;
}
.st-notes-ico {
  flex: none;
}
.st-text {
  margin-left: 7px;
  letter-spacing: -0.5px;
}
.st-comm-ico {
  margin-left: 30px;
  flex: none;
}
.view {
  width: 64px;
  height: 34px;
  display: flex;
  align-items: center;
  justify-content: center;
  flex: none;
}
.view.active {
  background: #c6c6c6;
  margin-left: 32px;
}
.zoom {
  display: flex;
  align-items: center;
  margin-left: 6px;
}
.z-sign {
  width: 26px;
  text-align: center;
  font-size: 22px;
  color: #888;
}
.z-track {
  position: relative;
  width: 164px;
  height: 2px;
  background: #555;
  margin: 0 0 0 3px;
}
.z-thumb {
  position: absolute;
  left: 59px;
  top: -15px;
  width: 8px;
  height: 32px;
  background: #444;
}
.z-tick {
  position: absolute;
  left: 81px;
  top: -8px;
  width: 2px;
  height: 18px;
  background: #555;
}
.z-pct {
  margin-left: 14px;
  width: 50px;
  letter-spacing: -0.5px;
}

/* youtube overlay */
.yt-logo {
  position: absolute;
  left: 23px;
  top: 25px;
  width: 70px;
  height: 71px;
  border-radius: 50%;
  background: #fff;
}
.logo-r {
  font-family: "Liberation Sans", sans-serif;
  font-size: 6.500px;
  fill: #8b2f8d;
  font-weight: 700;
}
.logo-d {
  font-family: "Liberation Sans", sans-serif;
  font-size: 5px;
  fill: #888;
  letter-spacing: 1px;
}
.logo-k {
  font-family: "Liberation Serif", serif;
  font-size: 4px;
  fill: #666;
}
.yt-title {
  position: absolute;
  left: 111px;
  top: 41px;
  font-family: Roboto, sans-serif;
  font-size: 32px;
  line-height: 40px;
  color: #fff;
  white-space: nowrap;
}
.yt-action {
  position: absolute;
  top: 27px;
  display: flex;
  flex-direction: column;
  align-items: center;
  font-family: Roboto, sans-serif;
  font-size: 25px;
  line-height: 30px;
  color: #f5efec;
  white-space: nowrap;
}
.yt-action svg {
  margin-bottom: 12px;
}
.yt-action.later {
  left: 2215px;
  width: 126px;
}
.yt-action.share {
  left: 2387px;
  width: 64px;
}
.yt-play {
  position: absolute;
  left: 1192px;
  top: 667px;
  width: 118px;
  height: 85px;
}
.yt-watch {
  position: absolute;
  left: 0;
  top: 1322px;
  width: 307px;
  height: 87px;
  padding-left: 23px;
  box-sizing: border-box;
  display: flex;
  align-items: center;
  padding-bottom: 6px;
  background: rgba(23, 23, 23, 0.82);
  border-radius: 0 4px 4px 0;
  color: #fff;
  white-space: nowrap;
}
.watch-text {
  font-family: Roboto, sans-serif;
  font-size: 28px;
  letter-spacing: 0.3px;
}
.yt-mark {
  display: flex;
  margin-left: 18px;
}
.yt-word {
  font-family: Roboto, sans-serif;
  font-weight: 700;
  font-size: 32px;
  letter-spacing: -1px;
  margin-left: 6px;
  transform: scaleX(0.64);
  transform-origin: left center;
}
</style>
